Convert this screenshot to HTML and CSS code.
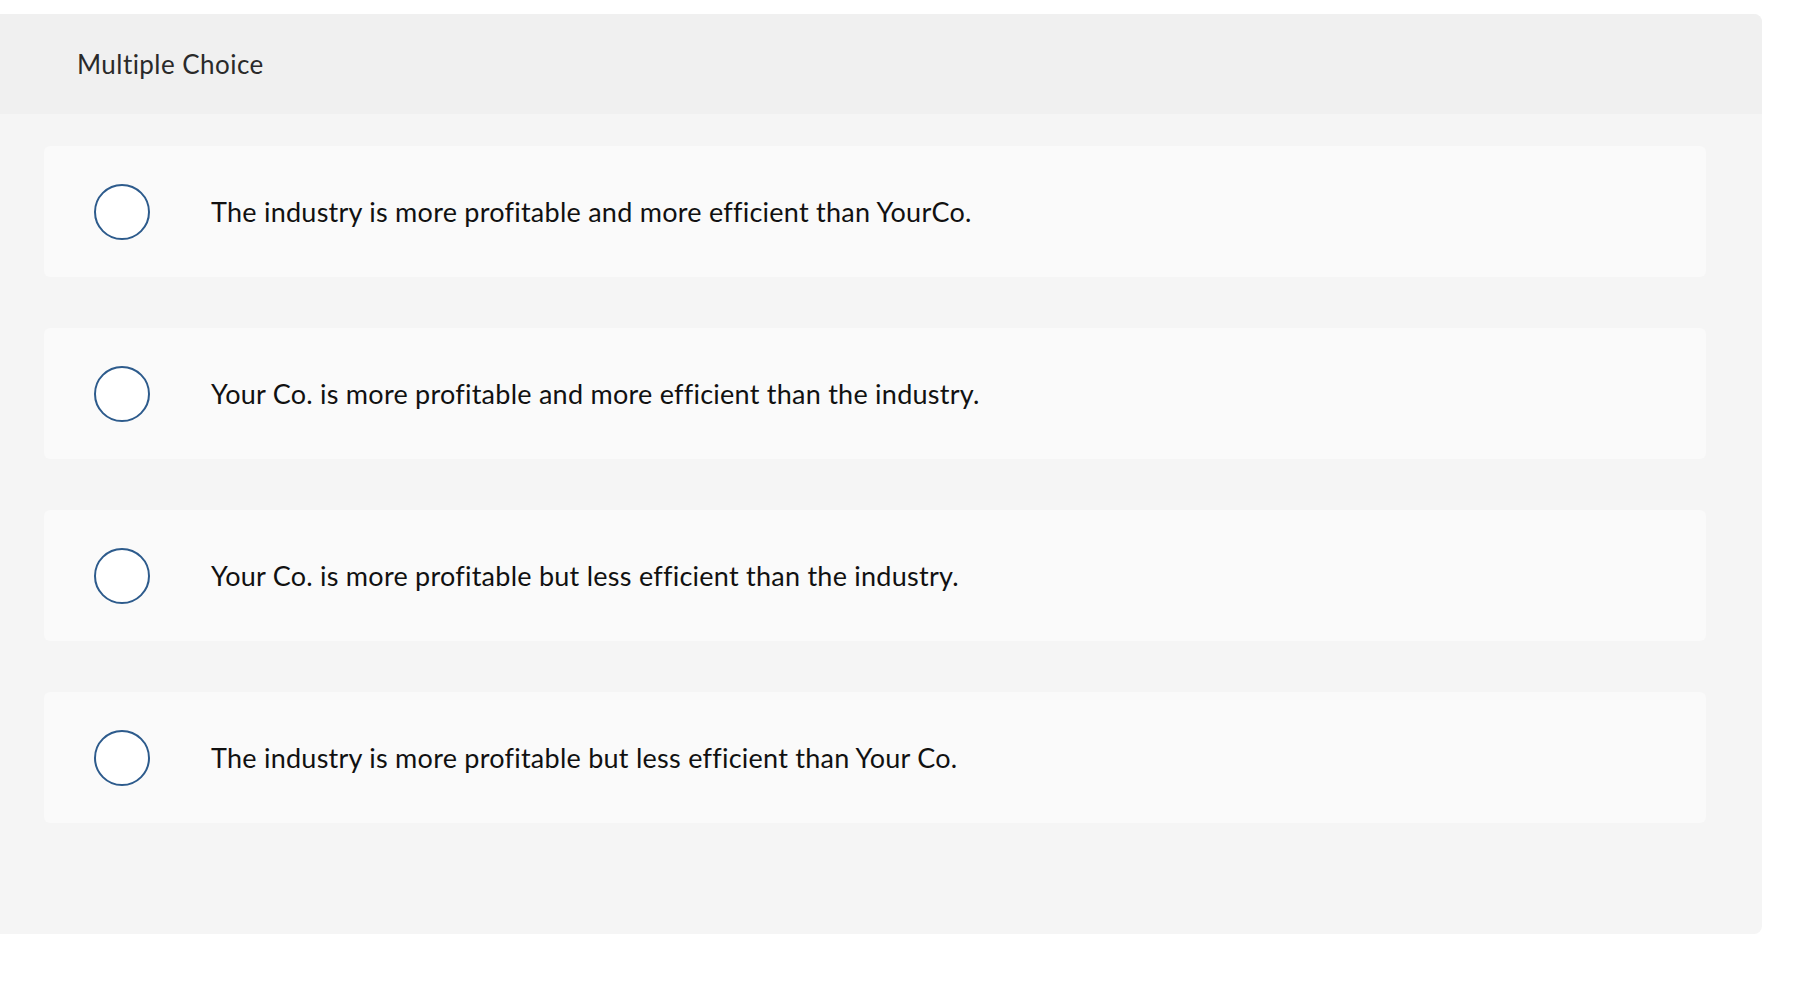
FILE: index.html
```html
<!DOCTYPE html>
<html lang="en">
<head>
<meta charset="utf-8">
<title>Multiple Choice</title>
<link rel="stylesheet" href="styles.css">
</head>
<body>
<div class="page">
  <section class="panel">
    <header class="panel-header">Multiple Choice</header>
    <div class="panel-body">
      <label class="option"><span class="radio"></span><span class="option-text">The industry is more profitable and more efficient than YourCo.</span></label>
      <label class="option"><span class="radio"></span><span class="option-text">Your Co. is more profitable and more efficient than the industry.</span></label>
      <label class="option"><span class="radio"></span><span class="option-text">Your Co. is more profitable but less efficient than the industry.</span></label>
      <label class="option"><span class="radio"></span><span class="option-text">The industry is more profitable but less efficient than Your Co.</span></label>
    </div>
  </section>
</div>
</body>
</html>
```

FILE: styles.css
```css
html, body {
  margin: 0;
  padding: 0;
  background: #ffffff;
}

body {
  font-family: Lato, "Liberation Sans", sans-serif;
  color: #111111;
  font-variant-ligatures: none;
  font-feature-settings: "liga" 0, "clig" 0;
}

.page {
  padding: 14px 32px 0 0;
}

.panel {
  width: 1762px;
  border-radius: 0 8px 8px 0;
  overflow: hidden;
  background: #f5f5f5;
}

.panel-header {
  height: 100px;
  background: #f0f0f0;
  display: flex;
  align-items: center;
  padding-left: 77px;
  font-size: 26px;
  letter-spacing: 0.45px;
  color: #2a2a2a;
  box-sizing: border-box;
}

.panel-body {
  padding: 32px 56px 111px 44px;
  display: flex;
  flex-direction: column;
  gap: 51px;
}

.option {
  height: 131px;
  background: #fafafa;
  border-radius: 6px;
  display: flex;
  align-items: center;
  padding-left: 50px;
}

.radio {
  width: 56px;
  height: 56px;
  box-sizing: border-box;
  border: 2.5px solid #2d5b8c;
  border-radius: 50%;
  background: #ffffff;
  flex: none;
}

.option-text {
  margin-left: 61px;
  font-size: 27px;
  letter-spacing: 0.25px;
  color: #111111;
}
```
